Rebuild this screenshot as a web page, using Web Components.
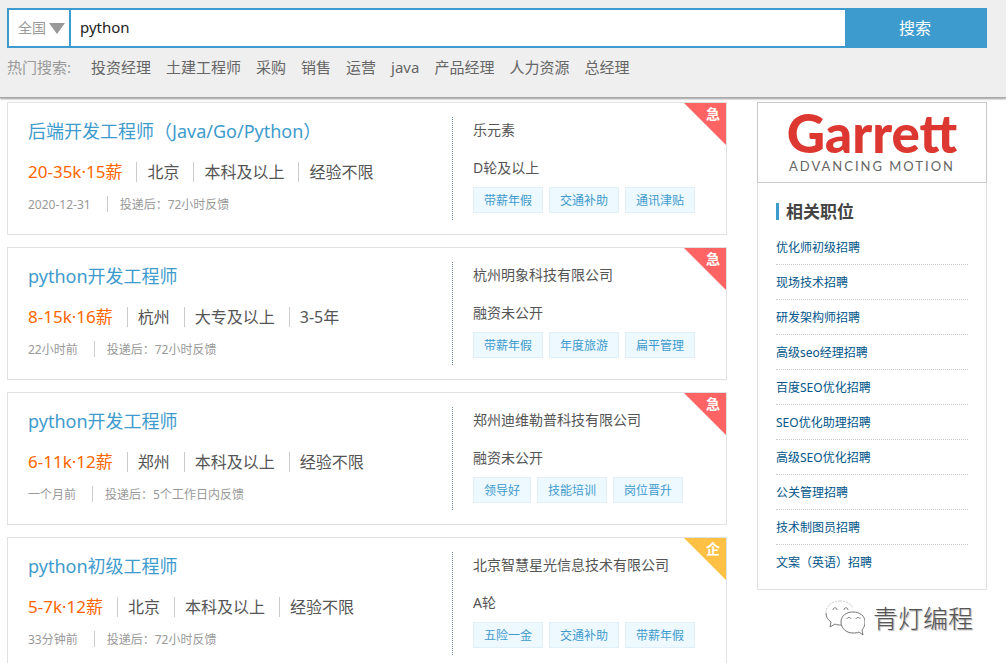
<!DOCTYPE html>
<html lang="zh-CN">
<head>
<meta charset="utf-8">
<title>python招聘</title>
<style>
html{background:#fff}
body{margin:0;font-family:"Noto Sans","Noto Sans CJK SC",sans-serif;color:#555;font-size:14px}
</style>
</head>
<body>
<job-page>
  <search-header slot="header" city="全国" query="python">
    <hot-link>投资经理</hot-link><hot-link>土建工程师</hot-link><hot-link>采购</hot-link><hot-link>销售</hot-link><hot-link>运营</hot-link><hot-link>java</hot-link><hot-link>产品经理</hot-link><hot-link>人力资源</hot-link><hot-link>总经理</hot-link>
  </search-header>
  <job-card name="后端开发工程师（Java/Go/Python）" salary="20-35k·15薪" facts="北京|本科及以上|经验不限" date="2020-12-31" reply="投递后：72小时反馈" company="乐元素" stage="D轮及以上" tags="带薪年假|交通补助|通讯津贴" badge="急"></job-card>
  <job-card name="python开发工程师" salary="8-15k·16薪" facts="杭州|大专及以上|3-5年" date="22小时前" reply="投递后：72小时反馈" company="杭州明象科技有限公司" stage="融资未公开" tags="带薪年假|年度旅游|扁平管理" badge="急"></job-card>
  <job-card name="python开发工程师" salary="6-11k·12薪" facts="郑州|本科及以上|经验不限" date="一个月前" reply="投递后：5个工作日内反馈" company="郑州迪维勒普科技有限公司" stage="融资未公开" tags="领导好|技能培训|岗位晋升" badge="急"></job-card>
  <job-card name="python初级工程师" salary="5-7k·12薪" facts="北京|本科及以上|经验不限" date="33分钟前" reply="投递后：72小时反馈" company="北京智慧星光信息技术有限公司" stage="A轮" tags="五险一金|交通补助|带薪年假" badge="企"></job-card>
  <brand-banner slot="side"></brand-banner>
  <related-jobs slot="side" heading="相关职位" items="优化师初级招聘|现场技术招聘|研发架构师招聘|高级seo经理招聘|百度SEO优化招聘|SEO优化助理招聘|高级SEO优化招聘|公关管理招聘|技术制图员招聘|文案（英语）招聘"></related-jobs>
  <account-mark slot="side">青灯编程</account-mark>
</job-page>

<script>
class Base extends HTMLElement {
  connectedCallback() {
    if (this.shadowRoot) return;
    this.attachShadow({ mode: "open" }).innerHTML = this.render();
  }
  a(name) { return this.getAttribute(name) || ""; }
  list(name) { return this.a(name).split("|").filter(Boolean); }
}

customElements.define("job-page", class extends Base {
  render() { return `
<style>
:host{display:block}
.body{display:flex;align-items:flex-start;gap:30px;padding:2px 19px 12px 7px}
main{flex:1;min-width:0;display:flex;flex-direction:column;gap:12px}
aside{flex:0 0 230px;display:flex;flex-direction:column}
</style>
<slot name="header"></slot>
<div class="body"><main><slot></slot></main><aside><slot name="side"></slot></aside></div>`; }
});

customElements.define("search-header", class extends Base {
  render() { return `
<style>
:host{display:block;background:#efefef;border-bottom:1px solid #a8a8a8;box-shadow:0 1px 2px #999;padding:8px 19px 18px 7px;margin-bottom:2px}
form{display:flex;height:40px;background:#3e9bcd;padding:2px 0 2px 2px;box-sizing:border-box;gap:2px}
.city{position:relative;width:60px;background:#fff;display:flex}
select{appearance:none;border:0;background:none;width:100%;padding:0 0 2px 9px;font:14px "Noto Sans","Noto Sans CJK SC",sans-serif;color:#999;outline:0}
.city svg{position:absolute;right:4px;top:13px;pointer-events:none}
input{flex:1;min-width:0;border:0;outline:0;padding:0 9px 2px;background:#fff;font:15px "Noto Sans","Noto Sans CJK SC",sans-serif;color:#222}
button{width:140px;border:0;background:#3e9bcd;color:#fff;font:16px "Noto Sans","Noto Sans CJK SC",sans-serif;padding:0 4px 2px 0}
nav{display:flex;gap:15px;margin-top:7px;line-height:24px;font-size:15px;white-space:nowrap}
nav span{color:#999;width:69px}
</style>
<form onsubmit="return false">
<div class="city"><select aria-label="城市"><option>${this.a("city")}</option></select>
<svg width="16" height="11" viewBox="0 0 16 11" aria-hidden="true"><path d="M0 0H16L8 11Z" fill="#999"/></svg></div>
<input type="text" aria-label="职位关键词" value="${this.a("query")}">
<button type="submit">搜索</button>
</form>
<nav><span>热门搜索:</span><slot></slot></nav>`; }
});

customElements.define("hot-link", class extends Base {
  render() { return `
<style>:host{display:block}a{color:#666;text-decoration:none}</style>
<a href="#"><slot></slot></a>`; }
});

customElements.define("job-card", class extends Base {
  render() { return `
<style>
:host{display:flex;position:relative;box-sizing:border-box;border:1px solid #e1e1e1;background:#fff;padding:14px 0}
a{text-decoration:none;color:#3e9bcd}
.post{flex:1;min-width:0;padding-left:20px;white-space:nowrap}
h3{margin:0;font-size:18px;font-weight:400;line-height:28px}
.row{display:flex}
.facts{margin-top:17px;font-size:16px;line-height:20px;color:#555}
.facts span+span{margin-left:14px;padding-left:10px;border-left:1px solid #ccc}
.facts .pay{color:#f60;font-size:17px}
.time{margin-top:14px;height:16px;font-size:12px;line-height:18px;color:#999}
.time span+span{margin-left:16px;padding-left:12px;border-left:1px solid #ccc;height:16px}
.firm{flex:0 0 253px;height:103px;padding-left:20px;border-left:1px dotted #6d8da3;line-height:26px}
.firm a,.firm p{display:block;margin:0;color:#555;font-size:14px}
.firm p{margin-top:12px}
.tags{gap:6px;margin-top:6px}
.tags span{box-sizing:border-box;height:26px;padding:0 10px;border:1px solid #dff0fa;background:#edf8ff;color:#3e9bcd;font-size:12px;line-height:26px}
.badge{position:absolute;top:0;right:0;width:42px;height:42px;background:${this.a("badge") === "企" ? "#ffc144" : "#ff6464"};clip-path:polygon(0 0,100% 0,100% 100%);color:#fff;font-size:14px;font-weight:700;line-height:21px;text-align:right;padding-right:6px;box-sizing:border-box}
</style>
<div class="post">
<h3><a href="#">${this.a("name")}</a></h3>
<div class="row facts"><span class="pay">${this.a("salary")}</span>${this.list("facts").map(t => `<span>${t}</span>`).join("")}</div>
<div class="row time"><span>${this.a("date")}</span><span>${this.a("reply")}</span></div>
</div>
<div class="firm"><a href="#">${this.a("company")}</a><p>${this.a("stage")}</p>
<div class="row tags">${this.list("tags").map(t => `<span>${t}</span>`).join("")}</div></div>
<div class="badge">${this.a("badge")}</div>`; }
});

customElements.define("brand-banner", class extends Base {
  render() { return `
<style>
:host{display:block;box-sizing:border-box;height:81px;border:1px solid #c8c8c8;background:#fff;font-family:Lato,sans-serif;text-align:center}
a{display:block;text-decoration:none;padding-top:4px}
b,span{display:block;white-space:nowrap}
b{font-size:53px;font-weight:900;line-height:52px;color:#dc3831}
span{font-size:13px;line-height:14px;letter-spacing:2px;color:#666}
</style>
<a href="#"><b>Garrett</b><span>ADVANCING MOTION</span></a>`; }
});

customElements.define("related-jobs", class extends Base {
  render() { return `
<style>
:host{display:block;border:1px solid #e1e1e1;border-top:0;background:#fff;padding:16px 18px 10px}
h2{display:flex;align-items:center;gap:7px;margin:0 0 6px;font-size:17px;line-height:25px;color:#444}
h2::before{content:"";width:3px;height:17px;background:#3e9bcd}
ul{list-style:none;margin:0;padding:0}
li{height:34px;line-height:36px;border-bottom:1px dotted #ccc;font-size:12px}
li:last-child{border:0}
a{color:#00558a;text-decoration:none}
</style>
<h2>${this.a("heading")}</h2>
<ul>${this.list("items").map(t => `<li><a href="#">${t}</a></li>`).join("")}</ul>`; }
});

customElements.define("account-mark", class extends Base {
  render() { return `
<style>
:host{display:flex;align-items:center;justify-content:flex-end;gap:8px;padding-right:14px;margin-top:9px;height:38px;font-size:25px;font-weight:300;line-height:38px;color:#555;text-shadow:1px 1px 1px #aaa;white-space:nowrap}
</style>
<svg width="40" height="36" viewBox="0 0 40 36" fill="#fff" stroke="#777" stroke-width="1" aria-hidden="true">
<path d="M15 1C7 1 1 6 1 13c0 4 2 7 5 9l-2 5 6-3c2 1 4 1 6 1 7 0 13-5 13-12S22 1 15 1Z" stroke="none"/>
<path d="M15 1C7 1 1 6 1 13M15 1c6 0 10 2 13 7" fill="none" stroke="#ccc" stroke-dasharray="2 1"/>
<path d="M1 13c0 4 2 7 5 9l-1 5 5-3c2 1 4 1 6 1" fill="none"/>
<path d="M28 12c-7 0-12 4-12 10s5 11 12 11c2 0 4 0 6-1l4 3-1-5c2-2 3-5 3-8 0-6-5-10-12-10Z"/>
<path d="M8 10c0-3 4-3 4 0M19 10c0-3 4-3 4 0M22 19c0-2 4-2 4 0M31 19c0-2 4-2 4 0" fill="none"/>
</svg><slot></slot>`; }
});
</script>
</body>
</html>
